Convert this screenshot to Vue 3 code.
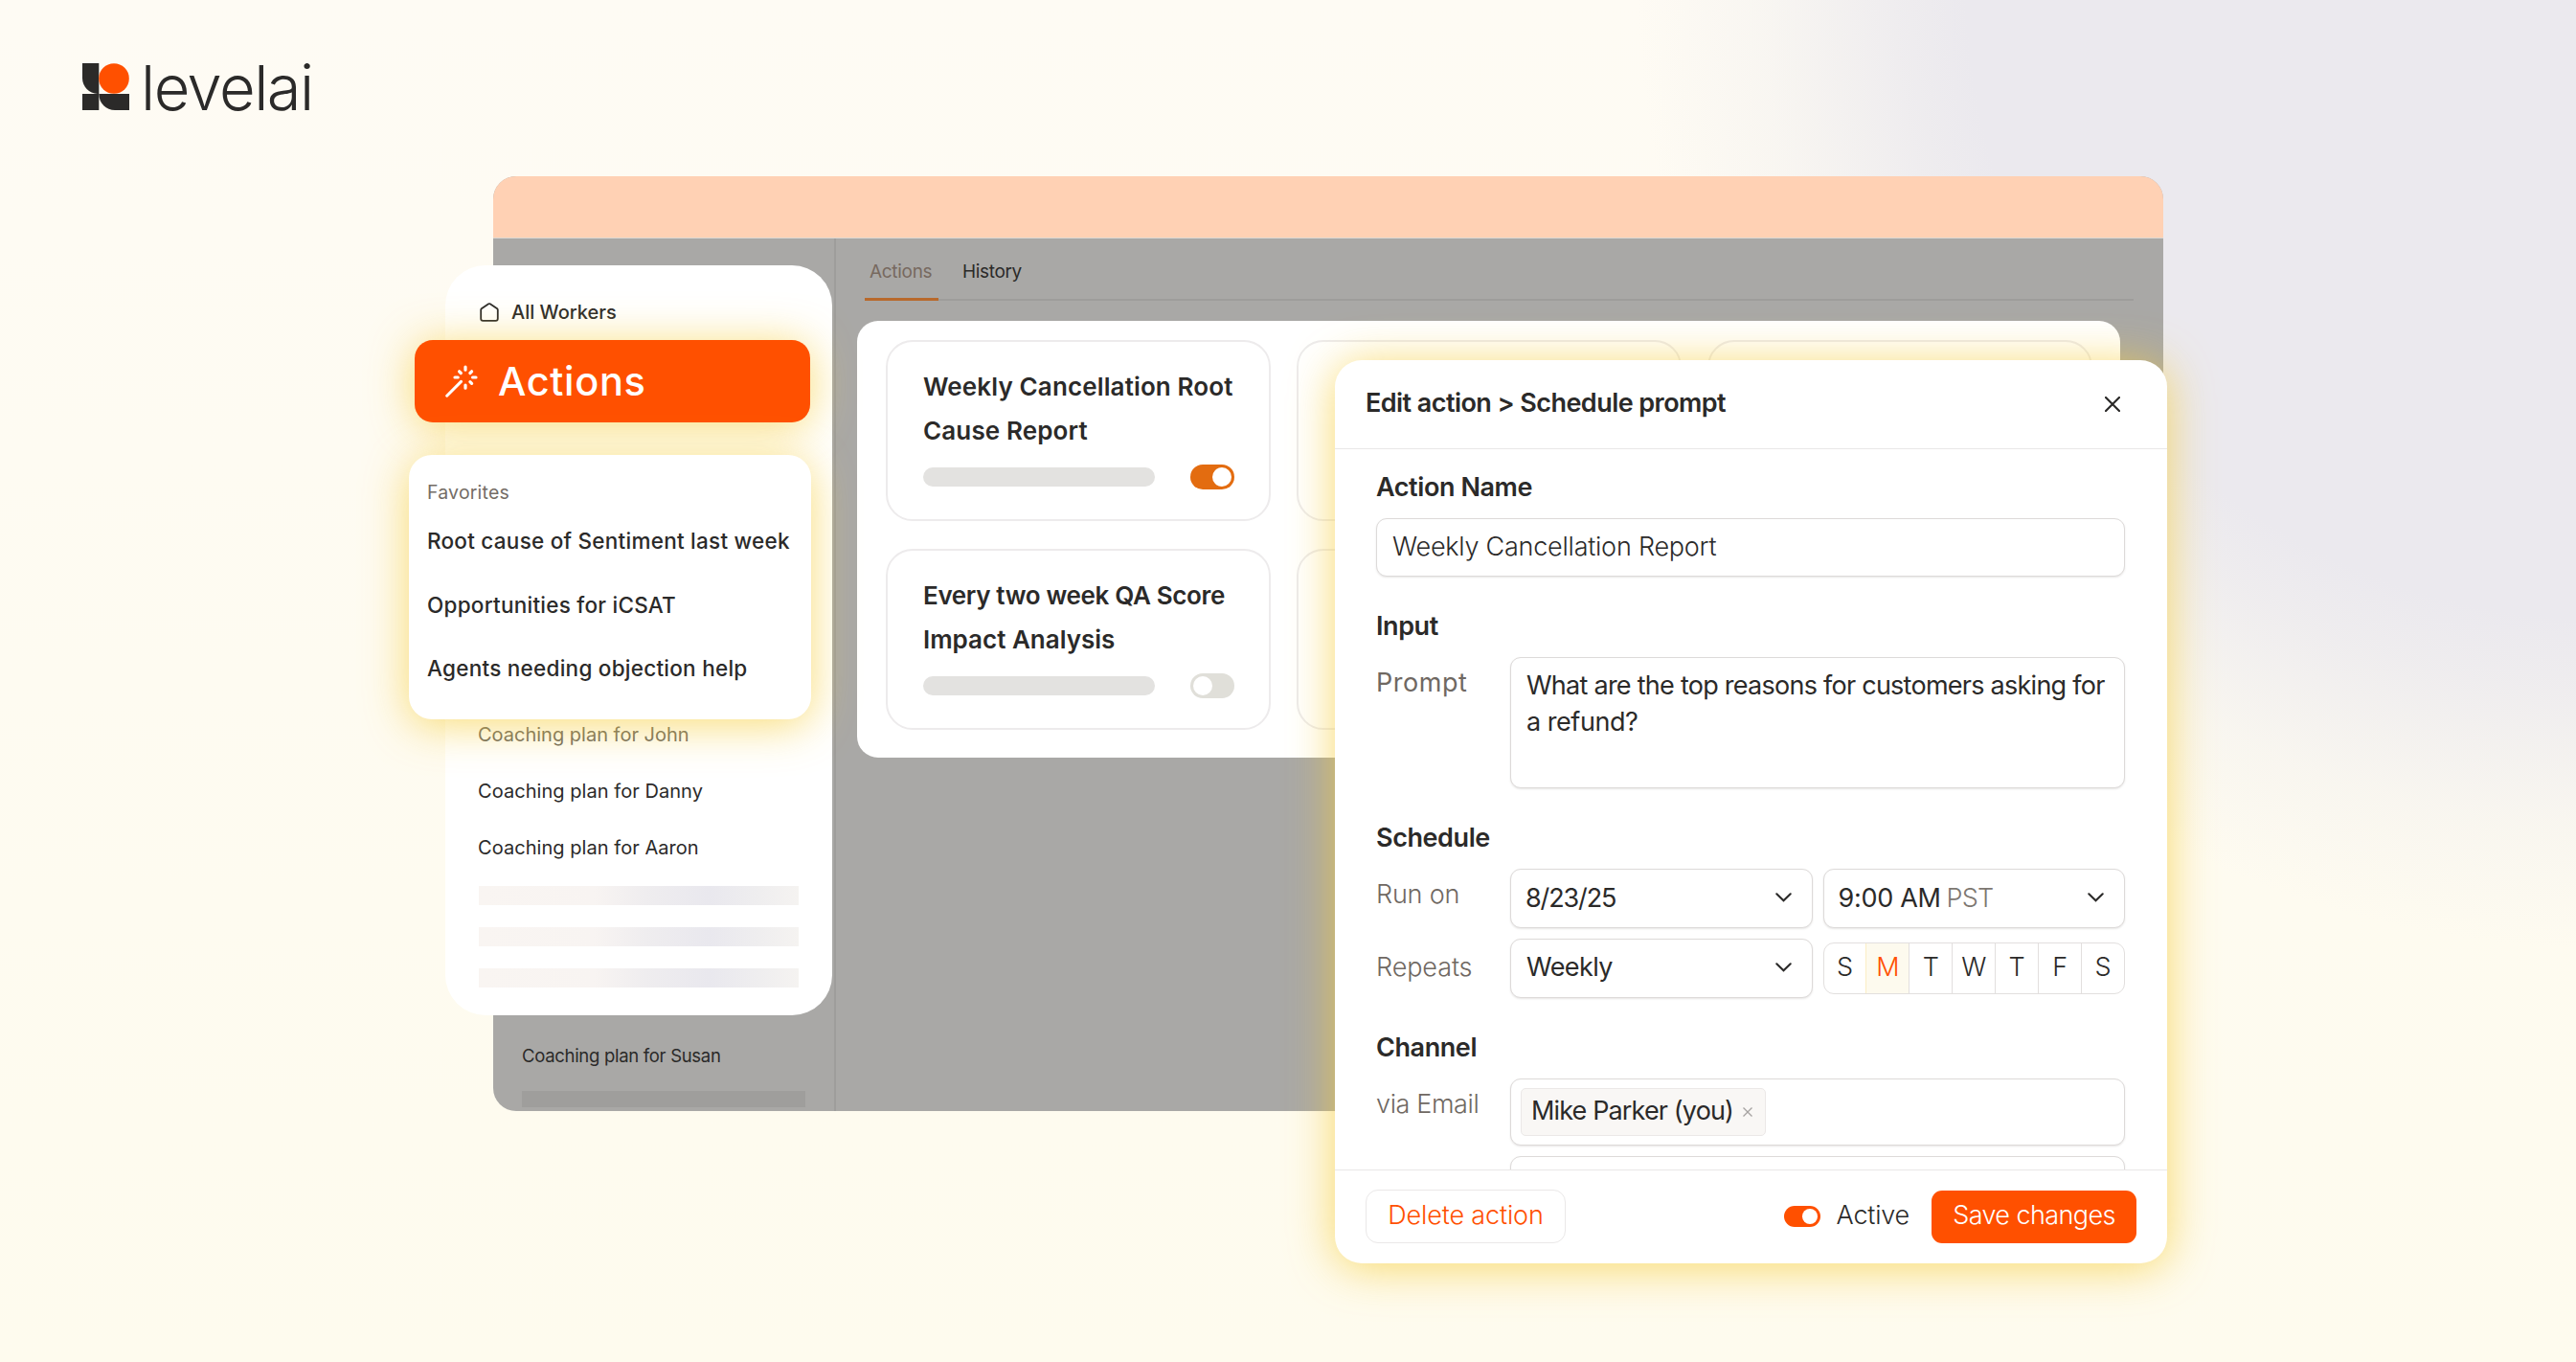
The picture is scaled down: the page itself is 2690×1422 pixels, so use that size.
<script setup>
import { ref } from 'vue'

const favorites = [
    'Root cause of Sentiment last week',
    'Opportunities for iCSAT',
    'Agents needing objection help',
]

const cards = ref([
    { lines: ['Weekly Cancellation Root', 'Cause Report'], active: true },
    { lines: ['Every two week QA Score', 'Impact Analysis'], active: false, tight: true },
])

const days = ['S', 'M', 'T', 'W', 'T', 'F', 'S']
const selectedDay = ref(1)
const actionName = ref('Weekly Cancellation Report')
const active = ref(true)
</script>

<template>
    <div class="page">
        <header class="logo">
            <svg class="logo-mark" viewBox="0 0 49 49">
                <path d="M0 0H17.3V32H16C7 31.500 0 24.500 0 15.500Z" fill="#2b2a29" />
                <circle cx="33" cy="16" r="15.800" fill="#ff5000" />
                <rect x="0" y="32" width="17.300" height="17" fill="#2b2a29" />
                <path d="M17.300 32H49V49H34C25 49 17.300 42 17.300 32Z" fill="#2b2a29" />
            </svg>
            <span class="logo-text">levelai</span>
        </header>

        <!-- Dimmed app window -->
        <div class="window">
            <div class="window-bar"></div>
            <div class="window-body">
                <div class="window-side">
                    <span class="susan">Coaching plan for Susan</span>
                    <div class="susan-bar"></div>
                </div>
                <div class="window-main">
                    <nav class="tabs">
                        <span class="tab current">Actions</span>
                        <span class="tab">History</span>
                    </nav>
                </div>
            </div>
        </div>

        <!-- Action cards -->
        <section class="board">
            <div class="board-col">
                <div v-for="card in cards" :key="card.lines[0]" class="card">
                    <h2 class="card-title" :class="{ tight: card.tight }">
                        <span v-for="line in card.lines" :key="line">{{ line }}</span>
                    </h2>
                    <div class="card-foot">
                        <div class="card-bar"></div>
                        <button
                            class="toggle"
                            :class="{ on: card.active }"
                            @click="card.active = !card.active"
                        >
                            <i class="knob"></i>
                        </button>
                    </div>
                </div>
            </div>
            <div v-for="n in 2" :key="n" class="board-col">
                <div class="card"></div>
                <div class="card"></div>
            </div>
        </section>

        <!-- Sidebar -->
        <aside class="sidebar">
            <div class="all-workers">
                <svg class="home" viewBox="0 0 20 20">
                    <path
                        d="M1.200 7.600 Q1.200 6.800 1.800 6.300 L9.200 1.300 Q10 .8 10.800 1.300 L18.200 6.300 Q18.800 6.800 18.800 7.600 V16.800 Q18.800 18.900 16.700 18.900 H3.300 Q1.200 18.900 1.200 16.800Z"
                        fill="none"
                        stroke="#2b2a29"
                        stroke-width="1.800"
                    />
                </svg>
                <span>All Workers</span>
            </div>
            <ul class="coaching">
                <li class="faded">Coaching plan for John</li>
                <li>Coaching plan for Danny</li>
                <li>Coaching plan for Aaron</li>
            </ul>
            <div class="placeholders">
                <div v-for="n in 3" :key="n" class="placeholder"></div>
            </div>
        </aside>
        <div class="actions-btn">
            <svg class="wand" viewBox="0 0 34 34">
                <g stroke="#fff" stroke-width="3.200" stroke-linecap="round">
                    <path d="M1.700 32.200 L16.500 17.400" stroke-width="3" />
                    <path d="M21 2V5.200M21 21V24.200M10 13H13.200M28.600 13H32" />
                    <path d="M14.600 6.800L16.300 8.500M27.600 6.800L25.900 8.500M25.900 17.600L27.600 19.300" />
                </g>
            </svg>
            <span>Actions</span>
        </div>
        <div class="favorites">
            <span class="fav-label">Favorites</span>
            <span v-for="item in favorites" :key="item" class="fav-item">{{ item }}</span>
        </div>

        <!-- Edit action modal -->
        <div class="modal">
            <div class="modal-head">
                <span class="modal-title">Edit action &gt; Schedule prompt</span>
                <svg class="close" viewBox="0 0 16 16">
                    <path d="M1 1L15 15M15 1L1 15" stroke="#2b2a29" stroke-width="2.200" stroke-linecap="round" />
                </svg>
            </div>
            <div class="modal-body">
                <section class="group">
                    <h3>Action Name</h3>
                    <div class="field name-field">{{ actionName }}</div>
                </section>
                <section class="group">
                    <h3>Input</h3>
                    <div class="row">
                        <label class="prompt-label">Prompt</label>
                        <div class="field textarea">
                            <span>What are the top reasons for customers asking for</span>
                            <span class="last">a refund?</span>
                        </div>
                    </div>
                </section>
                <section class="group">
                    <h3>Schedule</h3>
                    <div class="row">
                        <label>Run on</label>
                        <div class="field select">
                            <span class="date">8/23/25</span>
                            <svg class="chevron" viewBox="0 0 17 10">
                                <path d="M1.300 1.300L8.500 8.300L15.700 1.300" fill="none" stroke="#2b2a29" stroke-width="2.100" stroke-linecap="round" />
                            </svg>
                        </div>
                        <div class="field select">
                            <span class="time">9:00 AM<em>PST</em></span>
                            <svg class="chevron" viewBox="0 0 17 10">
                                <path d="M1.300 1.300L8.500 8.300L15.700 1.300" fill="none" stroke="#2b2a29" stroke-width="2.100" stroke-linecap="round" />
                            </svg>
                        </div>
                    </div>
                    <div class="row">
                        <label class="repeats">Repeats</label>
                        <div class="field select">
                            <span class="weekly">Weekly</span>
                            <svg class="chevron" viewBox="0 0 17 10">
                                <path d="M1.300 1.300L8.500 8.300L15.700 1.300" fill="none" stroke="#2b2a29" stroke-width="2.100" stroke-linecap="round" />
                            </svg>
                        </div>
                        <div class="days">
                            <span
                                v-for="(day, i) in days"
                                :key="i"
                                class="day"
                                :class="{ selected: i === selectedDay }"
                                @click="selectedDay = i"
                            >{{ day }}</span>
                        </div>
                    </div>
                </section>
                <section class="group">
                    <h3>Channel</h3>
                    <div class="row">
                        <label class="via">via Email</label>
                        <div class="field email">
                            <span class="chip">
                                Mike Parker (you)
                                <svg class="chip-x" viewBox="0 0 10 10">
                                    <path d="M.5 .5L9.500 9.500M9.500 .5L.5 9.500" stroke="#a5a2a0" stroke-width="1.300" />
                                </svg>
                            </span>
                        </div>
                    </div>
                    <div class="row">
                        <label></label>
                        <div class="field email"></div>
                    </div>
                </section>
            </div>
            <div class="modal-foot">
                <button class="delete-btn">Delete action</button>
                <button class="toggle small" :class="{ on: active }" @click="active = !active">
                    <i class="knob"></i>
                </button>
                <span class="active-label">Active</span>
                <button class="save-btn">Save changes</button>
            </div>
        </div>
    </div>
</template>

<style>
body {
    margin: 0;
}
</style>

<style scoped>
* {
    box-sizing: border-box;
}

.page {
    position: relative;
    width: 2690px;
    height: 1422px;
    overflow: hidden;
    font-family: Inter, 'Liberation Sans', sans-serif;
    color: #2b2a29;
    white-space: nowrap;
    background:
        radial-gradient(1010px 1010px at 2720px -20px, #ebe9ee 0%, #ebe9ee 66%, rgba(236, 234, 238, 0.85) 73%, rgba(240, 238, 238, 0.4) 87%, rgba(244, 242, 240, 0) 100%),
        linear-gradient(180deg, #fefbf4 0%, #fefbee 100%);
}

button {
    font: inherit;
    border: 0;
    padding: 0;
}

svg {
    display: block;
    flex: none;
}

.logo {
    display: flex;
    gap: 11px;
    padding: 66px 0 0 86px;
}

.logo-mark {
    width: 49px;
    height: 49px;
}

.logo-text {
    margin-left: 1px;
    font-size: 65px;
    font-weight: 300;
    line-height: 51px;
    letter-spacing: -1.5px;
}

/* Dimmed window */
.window {
    position: absolute;
    left: 515px;
    top: 184px;
    width: 1744px;
    height: 976px;
    border-radius: 24px;
    overflow: hidden;
    display: flex;
    flex-direction: column;
    background: #a9a8a6;
}

.window-bar {
    height: 65px;
    background: #ffd1b4;
    border-bottom: 1px solid #dcd8d2;
}

.window-body {
    flex: 1;
    display: flex;
}

.window-side {
    width: 358px;
    border-right: 2px solid #9e9d9b;
    display: flex;
    flex-direction: column;
    justify-content: flex-end;
    padding: 0 0 4px 30px;
}

.susan {
    font-size: 18.5px;
    font-weight: 400;
    line-height: 24px;
    letter-spacing: -0.3px;
}

.susan-bar {
    width: 296px;
    height: 17px;
    margin-top: 25px;
    background: #9f9e9c;
}

.window-main {
    flex: 1;
    padding: 0 31px 0 30px;
}

.tabs {
    display: flex;
    height: 65px;
    border-bottom: 2px solid #9e9d9b;
}

.tab {
    height: 65px;
    padding: 0 12px;
    margin-left: 7px;
    font-size: 19px;
    font-weight: 400;
    line-height: 69px;
    letter-spacing: -0.35px;
}

.tab.current {
    width: 77px;
    margin-left: 0;
    padding: 0 5px;
    margin-right: 6px;
    letter-spacing: -0.3px;
    color: #77695f;
    border-bottom: 3px solid #b8692c;
}

/* Cards board */
.board {
    position: absolute;
    left: 895px;
    top: 335px;
    width: 1319px;
    height: 456px;
    padding: 20px 27px 0 30px;
    display: flex;
    gap: 27px;
    border-radius: 22px;
    background: #fff;
}

.board-col {
    display: flex;
    flex-direction: column;
    gap: 29px;
}

.card {
    width: 402px;
    height: 189px;
    padding: 24px 36px 0 37px;
    border: 2px solid #edebec;
    border-radius: 28px;
}

.card-title {
    margin: 0;
    display: flex;
    flex-direction: column;
    font-size: 26px;
    font-weight: 600;
    line-height: 46px;
    letter-spacing: 0.13px;
}

.card-title.tight {
    letter-spacing: -0.35px;
}

.card-title.tight span:last-child {
    letter-spacing: 0;
}

.card-foot {
    display: flex;
    align-items: center;
    gap: 37px;
    margin-top: 12px;
}

.card-bar {
    width: 242px;
    height: 20px;
    border-radius: 10px;
    background: #e3e2e0;
}

.toggle {
    width: 46px;
    height: 26px;
    padding: 3px;
    border-radius: 13px;
    display: flex;
    justify-content: flex-start;
    background: #e0dfd9;
}

.toggle.on {
    justify-content: flex-end;
    background: #e36c10;
}

.knob {
    width: 20px;
    height: 20px;
    border-radius: 50%;
    background: #fff;
}

/* Sidebar */
.sidebar {
    position: absolute;
    left: 465px;
    top: 277px;
    width: 404px;
    height: 783px;
    padding: 39px 34px 0;
    border-radius: 42px;
    background: #fff;
}

.all-workers {
    display: flex;
    align-items: center;
    gap: 13px;
    height: 20px;
    padding-left: 2px;
    font-size: 20px;
    font-weight: 500;
}

.home {
    width: 20px;
    height: 20px;
}

.coaching {
    list-style: none;
    margin: 402px 0 0;
    padding: 0;
    font-size: 20px;
    font-weight: 400;
    line-height: 59px;
    letter-spacing: 0.05px;
}

.coaching li {
    height: 59px;
}

.coaching .faded {
    color: #6d6862;
    letter-spacing: 0;
}

.placeholders {
    display: flex;
    flex-direction: column;
    gap: 23px;
    margin-top: 10px;
    padding-left: 1px;
}

.placeholder {
    width: 334px;
    height: 20px;
    background: linear-gradient(90deg, #f9f5f2 0%, #f8f4f2 36%, #efedef 52%, #e9e8ee 72%, #efeeef 88%, #f5f3f1 100%);
}

.actions-btn {
    position: absolute;
    left: 433px;
    top: 355px;
    width: 413px;
    height: 86px;
    padding: 0 32px;
    display: flex;
    align-items: center;
    gap: 21px;
    border-radius: 19px;
    background: #ff5000;
    color: #fff;
    font-size: 41.5px;
    font-weight: 500;
    letter-spacing: 0.65px;
    box-shadow: 0 4px 46px rgba(247, 205, 57, 0.7);
}

.wand {
    width: 34px;
    height: 34px;
}

.favorites {
    position: absolute;
    left: 427px;
    top: 475px;
    width: 420px;
    height: 276px;
    padding: 24px 19px 0;
    display: flex;
    flex-direction: column;
    border-radius: 24px;
    background: #fff;
    box-shadow: 0 6px 46px rgba(247, 205, 57, 0.7);
}

.fav-label {
    height: 33px;
    font-size: 19.5px;
    line-height: 30px;
    letter-spacing: 0.2px;
    color: #746d66;
}

.fav-item {
    height: 66.500px;
    font-size: 22.5px;
    font-weight: 500;
    line-height: 66px;
    letter-spacing: 0.25px;
}

/* Modal */
.modal {
    position: absolute;
    left: 1394px;
    top: 376px;
    width: 869px;
    height: 943px;
    display: flex;
    flex-direction: column;
    border-radius: 28px;
    background: #fff;
    font-size: 27px;
    letter-spacing: -0.6px;
    box-shadow: 0 4px 48px rgba(247, 205, 57, 0.75);
}

.modal-head {
    height: 93px;
    padding: 0 49px 0 32px;
    display: flex;
    align-items: center;
    justify-content: space-between;
    border-bottom: 1px solid #e9e7e7;
}

.modal-title {
    padding-bottom: 4px;
    font-weight: 600;
    letter-spacing: -0.56px;
}

.close {
    width: 16px;
    height: 16px;
}

.modal-body {
    height: 752px;
    padding: 7px 44px 0 43px;
    overflow: hidden;
}

.group {
    margin-bottom: 19px;
}

h3 {
    margin: 0;
    font-size: 27px;
    font-weight: 600;
    line-height: 65px;
    letter-spacing: -0.42px;
}

.row {
    display: flex;
    gap: 11px;
    margin-bottom: 11px;
}

.row:last-child {
    margin-bottom: 0;
}

label {
    flex: none;
    width: 129px;
    line-height: 53px;
    letter-spacing: -0.2px;
    color: #6f6862;
    font-weight: 300;
}

.prompt-label {
    font-weight: 400;
    letter-spacing: 0.55px;
}

.repeats {
    line-height: 59px;
    letter-spacing: -0.1px;
}

.via {
    letter-spacing: -0.38px;
}

.field {
    border: 1px solid #dddad9;
    border-radius: 11px;
    background: #fff;
    box-shadow: 0 1px 2px rgba(60, 50, 40, 0.12);
}

.name-field {
    height: 61px;
    padding-left: 16px;
    line-height: 57px;
    font-weight: 300;
    letter-spacing: -0.24px;
}

.textarea {
    flex: 1;
    height: 137px;
    padding: 10px 16px;
    display: flex;
    flex-direction: column;
    line-height: 38px;
    letter-spacing: -0.74px;
}

.textarea .last {
    letter-spacing: -0.46px;
}

.select {
    width: 316px;
    height: 62px;
    padding: 0 21px 2px 16px;
    display: flex;
    align-items: center;
    justify-content: space-between;
}

.date {
    margin-left: -1px;
    letter-spacing: -1.13px;
}

.time {
    margin-left: -1px;
    letter-spacing: -0.3px;
}

.weekly {
    padding-bottom: 1px;
}

.time em {
    margin-left: 6px;
    font-style: normal;
    font-weight: 300;
    letter-spacing: -0.78px;
    color: #7d7771;
}

.chevron {
    width: 17px;
    height: 10px;
}

.days {
    width: 316px;
    height: 54px;
    margin-top: 4px;
    display: flex;
    border: 1px solid #e2dfde;
    border-radius: 11px;
    overflow: hidden;
}

.day {
    flex: 1 1 0;
    line-height: 49px;
    text-align: center;
    font-weight: 300;
    letter-spacing: 0;
    border-left: 1px solid #e2dfde;
}

.day:first-child {
    border-left: 0;
}

.day.selected {
    color: #ff5000;
    background: #fdfaee;
    border-left-color: #fbeec5;
}

.email {
    flex: 1;
    height: 70px;
    padding: 9px 10px;
    display: flex;
}

.chip {
    height: 50px;
    padding: 0 13px 3px 10px;
    display: flex;
    align-items: center;
    gap: 10px;
    border: 1px solid #ebe8e7;
    border-radius: 5px;
    background: #f9f7f5;
    letter-spacing: -0.86px;
}

.chip-x {
    width: 10px;
    height: 10px;
    margin-top: 3px;
}

.modal-foot {
    flex: 1;
    display: flex;
    align-items: center;
    padding: 0 32px;
    border-top: 1px solid #e9e7e7;
    padding-bottom: 1px;
}

.delete-btn {
    width: 209px;
    height: 56px;
    margin-right: auto;
    padding: 0 0 3px 0;
    border: 1px solid #eae8e8;
    border-radius: 13px;
    background: #fff;
    color: #ff5000;
    font-weight: 300;
    letter-spacing: -0.15px;
}

.toggle.small {
    width: 38px;
    height: 22px;
    background: #ff5000;
}

.toggle.small .knob {
    width: 16px;
    height: 16px;
}

.active-label {
    margin: 0 23px 3px 17px;
    font-weight: 300;
    letter-spacing: -0.2px;
}

.save-btn {
    width: 214px;
    height: 55px;
    padding: 0 0 3px 0;
    border-radius: 11px;
    background: #ff5000;
    color: #fff;
    font-weight: 300;
    letter-spacing: -0.6px;
}
</style>
